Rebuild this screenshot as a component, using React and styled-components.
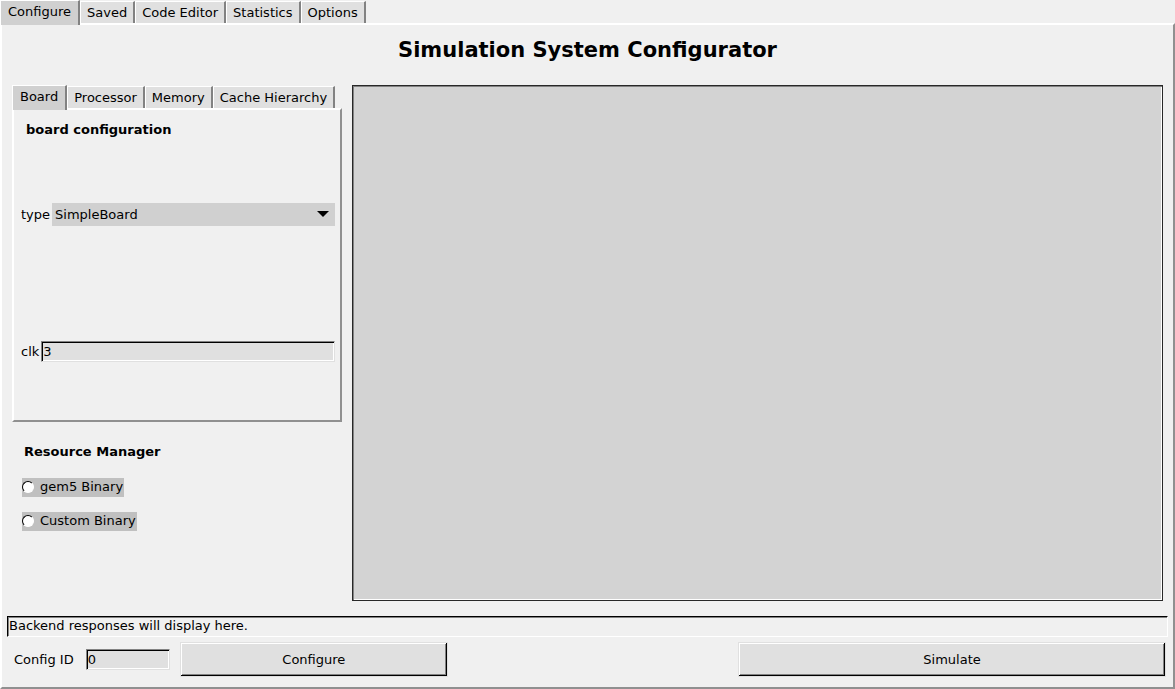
import React, { useState } from "react";
import styled, { createGlobalStyle } from "styled-components";

const GlobalStyle = createGlobalStyle`
  *, *::before, *::after { box-sizing: border-box; }
  body {
    margin: 0;
    background: #f0f0f0;
    color: #000;
    font: 13px/18px "DejaVu Sans", sans-serif;
  }
  button, input, select { font: inherit; color: inherit; margin: 0; border-radius: 0; }
  h1, h2 { margin: 0; }
`;

const Window = styled.main`
  display: flex;
  flex-direction: column;
  min-height: 100vh;
`;

const TabList = styled.div`
  display: flex;
  align-items: flex-end;
  height: 23px;
`;

const Tab = styled.button`
  position: relative;
  height: ${(p) => (p.$active ? 25 : 22)}px;
  margin-bottom: ${(p) => (p.$active ? -2 : 0)}px;
  padding: ${(p) => (p.$active ? "0 7px 3px" : "0 6px")};
  border: 0;
  border-top: 1px solid #fff;
  border-left: 1px solid #fff;
  border-right: 2px solid #828282;
  background: ${(p) => (p.$active ? "#d0d0d0" : "#e0e0e0")};
  white-space: nowrap;
`;

const TabPanel = styled.section`
  display: flex;
  flex-direction: column;
  flex: ${(p) => (p.$grow ? 1 : "none")};
  border: 2px solid;
  border-color: #fff #909090 #909090 #fff;
`;

const Title = styled.h1`
  padding: 11px 0 21px;
  font-size: 21px;
  line-height: 28px;
  font-weight: bold;
  text-align: center;
`;

const Workspace = styled.div`
  display: flex;
  flex: 1;
  gap: 10px;
  padding: 0 10px;
`;

const Sidebar = styled.div`
  flex: none;
  width: 330px;
`;

const BoardForm = styled.form`
  display: grid;
  grid-template-rows: 36px 1fr 1fr;
  min-height: 310px;
  padding: 0 5px 0 7px;
`;

const Heading = styled.h2`
  padding: ${(p) => (p.$inset ? "11px 5px 0" : "21px 12px 0")};
  font-size: 13px;
  line-height: 18px;
  font-weight: bold;
`;

const Field = styled.div`
  display: flex;
  align-items: center;
  gap: 2px;
`;

const SelectBox = styled.div`
  position: relative;
  flex: 1;
`;

const Select = styled.select`
  appearance: none;
  display: block;
  width: 100%;
  height: 23px;
  padding: 0 24px 0 3px;
  border: 0;
  background: #d0d0d0;
`;

const Arrow = styled.svg`
  position: absolute;
  top: 8px;
  right: 6px;
  pointer-events: none;
`;

const Entry = styled.input`
  flex: ${(p) => (p.$short ? "none" : 1)};
  width: ${(p) => (p.$short ? "84px" : "auto")};
  min-width: 0;
  height: 21px;
  padding: 0 1px;
  border: 1px solid;
  border-color: #828282 #e0e0e0 #e0e0e0 #828282;
  box-shadow: inset 1px 1px #000, inset -1px -1px #fff;
  background: #e0e0e0;
  outline: 0;
`;

const RadioGroup = styled.div`
  display: flex;
  flex-direction: column;
  align-items: flex-start;
  gap: 15px;
  padding: 17px 10px 0;
`;

const RadioLabel = styled.label`
  display: flex;
  align-items: center;
  gap: 6px;
  height: 19px;
  padding: 0 1px 1px 0;
  background: #c0c0c0;
`;

const Radio = styled.input`
  appearance: none;
  width: 12px;
  height: 12px;
  border: 1px solid;
  border-color: #000 #fff #fff #000;
  background: ${(p) => (p.checked ? "#000" : "#fff")};

  && { border-radius: 50%; }
`;

const Canvas = styled.div`
  flex: 1;
  border: 1px solid #282828;
  box-shadow: inset 1px 1px #828282, inset -1px -1px #fff;
  background: #d3d3d3;
`;

const Response = styled.output`
  display: block;
  height: 21px;
  margin: 15px 5px 5px;
  padding: 0 1px;
  border: 1px solid;
  border-color: #000 #fff #fff #000;
  box-shadow: inset 1px 1px #828282;
`;

const ActionBar = styled.div`
  display: flex;
  align-items: center;
  padding: 0 7px 10px 12px;
`;

const IdField = styled.div`
  display: flex;
  align-items: center;
  gap: 12px;
  margin-right: 10px;
`;

const ActionButton = styled.button`
  flex: ${(p) => p.$share} 1 0;
  height: 35px;
  padding: 0;
  border: 1px solid #e0e0e0;
  box-shadow: inset -1px -1px #000, inset 1px 1px #fff, inset -2px -2px #828282;
  background: #e0e0e0;
`;

const Spacer = styled.div`
  flex: ${(p) => p.$share} 1 0;
`;

const PAGES = ["Configure", "Saved", "Code Editor", "Statistics", "Options"];
const PARTS = ["Board", "Processor", "Memory", "Cache Hierarchy"];
const BINARIES = ["gem5 Binary", "Custom Binary"];

function Tabs({ names, label }) {
  const [active, setActive] = useState(names[0]);
  return (
    <TabList role="tablist" aria-label={label}>
      {names.map((name) => (
        <Tab
          key={name}
          type="button"
          role="tab"
          aria-selected={name === active}
          $active={name === active}
          onClick={() => setActive(name)}
        >
          {name}
        </Tab>
      ))}
    </TabList>
  );
}

export default function App() {
  const [binary, setBinary] = useState("");
  return (
    <>
      <GlobalStyle />
      <Window>
        <Tabs names={PAGES} label="Pages" />
        <TabPanel $grow>
          <Title>Simulation System Configurator</Title>
          <Workspace>
            <Sidebar>
              <Tabs names={PARTS} label="System parts" />
              <TabPanel>
                <BoardForm>
                  <Heading $inset>board configuration</Heading>
                  <Field>
                    <label htmlFor="type">type</label>
                    <SelectBox>
                      <Select id="type">
                        <option>SimpleBoard</option>
                      </Select>
                      <Arrow width="12" height="6" viewBox="0 0 12 6">
                        <path d="M0 0H12L6 6Z" />
                      </Arrow>
                    </SelectBox>
                  </Field>
                  <Field>
                    <label htmlFor="clk">clk</label>
                    <Entry id="clk" defaultValue="3" />
                  </Field>
                </BoardForm>
              </TabPanel>
              <Heading>Resource Manager</Heading>
              <RadioGroup role="radiogroup" aria-label="Resource Manager">
                {BINARIES.map((name) => (
                  <RadioLabel key={name}>
                    <Radio
                      type="radio"
                      name="binary"
                      checked={binary === name}
                      onChange={() => setBinary(name)}
                    />
                    {name}
                  </RadioLabel>
                ))}
              </RadioGroup>
            </Sidebar>
            <Canvas />
          </Workspace>
          <Response>Backend responses will display here.</Response>
          <ActionBar>
            <IdField>
              <label htmlFor="config-id">Config ID</label>
              <Entry id="config-id" $short defaultValue="0" />
            </IdField>
            <ActionButton type="button" $share={267}>Configure</ActionButton>
            <Spacer $share={291} />
            <ActionButton type="button" $share={427}>Simulate</ActionButton>
          </ActionBar>
        </TabPanel>
      </Window>
    </>
  );
}
